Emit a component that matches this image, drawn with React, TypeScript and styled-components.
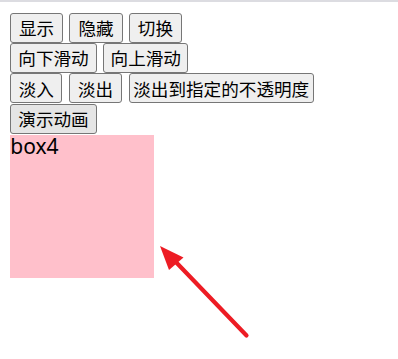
import React from "react";
import styled, { createGlobalStyle } from "styled-components";

const Global = createGlobalStyle`
  html, body { margin: 0; padding: 0; background: #fff; }
  body { font-family: "Noto Sans", "Noto Sans CJK SC", sans-serif; }
`;

const Page = styled.div`
  position: relative;
  width: 398px;
  height: 359px;
  box-sizing: border-box;
  border-top: 2px solid #dcdce1;
  padding: 10.7px 0 0 10.3px;
  display: flex;
  flex-direction: column;
  gap: 0.4px;
  overflow: hidden;
`;

const Row = styled.div`
  display: flex;
  gap: 6.6px;
`;

const Button = styled.button<{ $w: number; $hover?: boolean }>`
  box-sizing: border-box;
  width: ${(p) => p.$w}px;
  height: 30px;
  padding: 0;
  margin: 0;
  border: 1px solid #767676;
  border-radius: 3px;
  background: ${(p) => (p.$hover ? "#e5e5e5" : "#efefef")};
  color: #000;
  font-family: "Noto Sans CJK SC", "Noto Sans", sans-serif;
  font-size: 17.6px;
  line-height: 1;
  display: flex;
  align-items: center;
  justify-content: center;
  white-space: nowrap;
`;

const Box = styled.div`
  width: 144px;
  height: 143.7px;
  background: #ffc0cb;
  color: #000;
  font-family: "Noto Sans", sans-serif;
  font-size: 21px;
  line-height: 22px;
  margin-top: 0.3px;
`;

const Annotation = styled.svg`
  position: absolute;
  left: 0;
  top: 0;
  pointer-events: none;
`;

export default function App() {
  return (
    <>
      <Global />
      <Page>
        <Row>
          <Button $w={52.4}>显示</Button>
          <Button $w={53.4}>隐藏</Button>
          <Button $w={52.4}>切换</Button>
        </Row>
        <Row>
          <Button $w={86.4}>向下滑动</Button>
          <Button $w={85}>向上滑动</Button>
        </Row>
        <Row>
          <Button $w={52}>淡入</Button>
          <Button $w={53.4}>淡出</Button>
          <Button $w={184.7}>淡出到指定的不透明度</Button>
        </Row>
        <Row>
          <Button $w={86.4} $hover>
            演示动画
          </Button>
        </Row>
        <Box>box4</Box>
        <Annotation width="398" height="359" viewBox="0 0 398 359">
          <line x1="246.5" y1="333.5" x2="172" y2="256" stroke="#ed1c24" strokeWidth="4.2" strokeLinecap="round" />
          <polygon points="160,244 183.5,255.5 169,268" fill="#ed1c24" />
        </Annotation>
      </Page>
    </>
  );
}
